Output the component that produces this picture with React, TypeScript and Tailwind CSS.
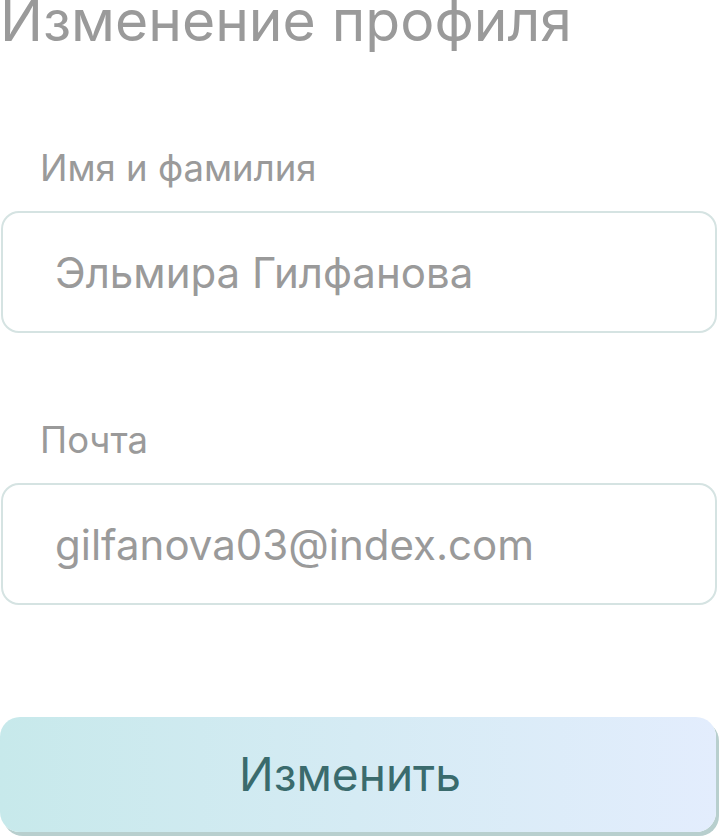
import React from "react";

export default function App() {
  const font = { fontFamily: "Inter, 'Noto Sans', sans-serif" };
  return (
    <div
      className="w-[720px] h-[838px] bg-white overflow-hidden flex flex-col"
      style={font}
    >
      <h1 className="text-[57px] leading-[56px] text-[#9a9a9a] font-normal -mt-[7px] ml-[0px] whitespace-nowrap">
        Изменение профиля
      </h1>

      <div className="mt-[99px] ml-[40px] text-[36.5px] leading-[40px] text-[#9a9a9a]">
        Имя и фамилия
      </div>
      <div className="mt-[23px] w-[716px] h-[122px] ml-[1px] border-2 border-[#d5e3e2] rounded-[18px] flex items-center pl-[52px] text-[42px] text-[#9a9a9a]">
        Эльмира Гилфанова
      </div>

      <div className="mt-[87px] ml-[40px] text-[36.5px] leading-[40px] text-[#9a9a9a]">
        Почта
      </div>
      <div className="mt-[23px] w-[716px] h-[122px] ml-[1px] border-2 border-[#d5e3e2] rounded-[18px] flex items-center pl-[52px] text-[42px] text-[#9a9a9a]">
        gilfanova03@index.com
      </div>

      <button className="mt-[112px] w-[716px] h-[115px] shrink-0 rounded-[20px] bg-gradient-to-r from-[#c7e9eb] to-[#e3edfd] shadow-[3px_4px_0_#b8cfce] flex items-center justify-center pr-[16px] text-[46px] text-[#3a6b6d]">
        Изменить
      </button>
    </div>
  );
}
